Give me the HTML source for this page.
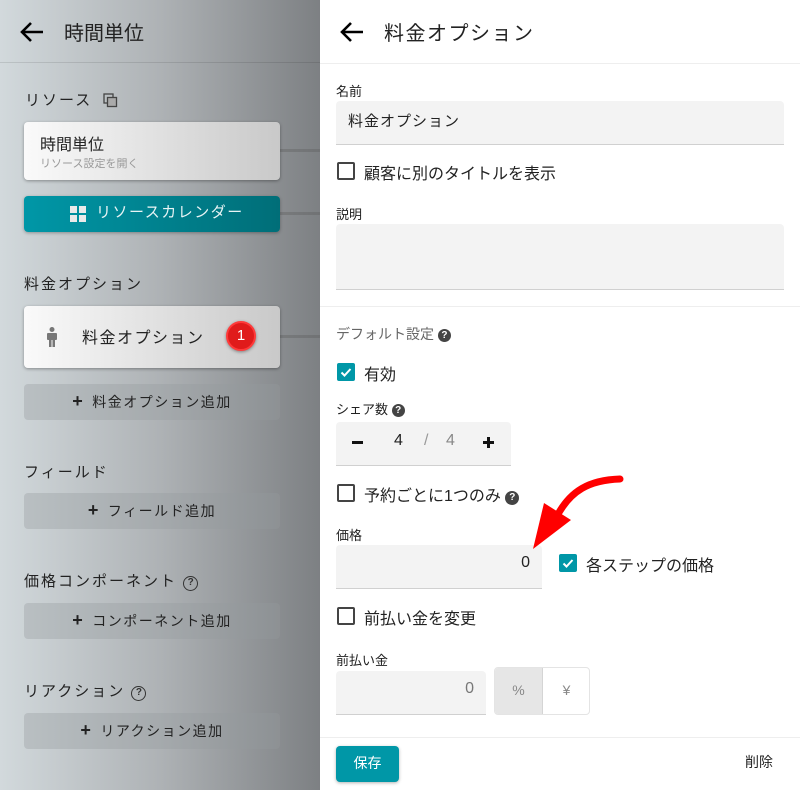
<!DOCTYPE html>
<html><head><meta charset="utf-8">
<style>
*{box-sizing:border-box;margin:0;padding:0}
body{width:800px;height:790px;overflow:hidden;position:relative;font-family:"Liberation Sans","Noto Sans CJK JP",sans-serif;color:#222;background:#fff}
.a{position:absolute}
#left{left:0;top:0;width:320px;height:790px;background:linear-gradient(90deg,#d2d9dc 0%,#aeb2b5 50%,#7d8083 100%)}
.lbl{font-size:15px;letter-spacing:2px;color:#222}
.card{left:24px;width:256px;background:linear-gradient(90deg,#fafafa,#c9c9c9);border-radius:4px;box-shadow:0 1px 3px rgba(0,0,0,.35)}
.addb{left:24px;width:256px;height:36px;background:rgba(150,155,158,.35);border-radius:4px;font-size:14px;letter-spacing:1.5px;text-align:center;line-height:34px;color:#222}
.addb b{font-size:18px;margin-right:8px}
.conn{left:280px;width:40px;height:3px;background:rgba(90,90,90,.35)}
.flbl{font-size:13px;color:#222}
.inp{background:#f3f3f3;border-bottom:1px solid #d0d0d0;border-radius:4px 4px 0 0}
.cb{width:18px;height:18px;border:2px solid #444;border-radius:2px}
.cbt{width:18px;height:18px;background:#0097a7;border-radius:2px}
.t16{font-size:16px}
.q{display:inline-block;width:13px;height:13px;border-radius:50%;background:#444;color:#fff;font-size:10px;font-weight:bold;text-align:center;line-height:13px;vertical-align:1px}
</style></head><body>
<div id="left" class="a">
  <svg class="a" style="left:20px;top:21px" width="24" height="22" viewBox="0 0 24 22"><path d="M23 11H3M11 2L2 11l9 9" stroke="#000" stroke-width="2.6" fill="none"/></svg>
  <div class="a" style="left:64px;top:17px;font-size:20px">時間単位</div>
  <div class="a" style="left:0;top:62px;width:320px;height:1px;background:rgba(0,0,0,.1)"></div>
  <div class="a lbl" style="left:25px;top:89px">リソース</div>
  <svg class="a" style="left:103px;top:93px" width="15" height="15" viewBox="0 0 15 15"><rect x="1" y="1" width="9" height="9" fill="none" stroke="#444" stroke-width="1.3"/><rect x="4.5" y="4.5" width="9" height="9" fill="#aaa" stroke="#444" stroke-width="1.3"/></svg>
  <div class="a conn" style="top:149px"></div>
  <div class="a card" style="top:122px;height:58px"><div class="a" style="left:16px;top:9px;font-size:16px">時間単位</div><div class="a" style="left:16px;top:33px;font-size:11px;color:#999">リソース設定を開く</div></div>
  <div class="a conn" style="top:212px"></div>
  <div class="a" style="left:24px;top:196px;width:256px;height:36px;border-radius:4px;background:linear-gradient(90deg,#0097a7,#006e78);box-shadow:0 1px 3px rgba(0,0,0,.3);color:#e8f4f5;font-size:15px;letter-spacing:1.5px;line-height:34px;padding-left:72px">リソースカレンダー
    <svg class="a" style="left:46px;top:10px" width="16" height="16" viewBox="0 0 16 16" fill="#eaeaea"><rect x="0" y="0" width="7" height="7"/><rect x="9" y="0" width="7" height="7"/><rect x="0" y="9" width="7" height="7"/><rect x="9" y="9" width="7" height="7"/></svg></div>
  <div class="a lbl" style="left:24px;top:273px">料金オプション</div>
  <div class="a conn" style="top:335px"></div>
  <div class="a card" style="top:306px;height:62px">
    <svg class="a" style="left:22px;top:21px" width="12" height="20" viewBox="0 0 12 20" fill="#777"><circle cx="6" cy="2.5" r="2.5"/><rect x="1" y="6" width="10" height="7" rx="1"/><rect x="3" y="12" width="2.5" height="8"/><rect x="6.5" y="12" width="2.5" height="8"/></svg>
    <div class="a" style="left:58px;top:18px;font-size:16px;letter-spacing:1.5px">料金オプション</div>
    <div class="a" style="left:202px;top:15px;width:30px;height:30px;border-radius:50%;background:#e01b1b;border:2px solid #ff3a3a;box-shadow:0 1px 3px rgba(0,0,0,.4);color:#fff;font-size:15px;text-align:center;line-height:26px">1</div>
  </div>
  <div class="a addb" style="top:384px"><b>+</b>料金オプション追加</div>
  <div class="a lbl" style="left:24px;top:461px">フィールド</div>
  <div class="a addb" style="top:493px"><b>+</b>フィールド追加</div>
  <div class="a lbl" style="left:24px;top:570px">価格コンポーネント <span class="q" style="background:none;border:1.5px solid #333;color:#333;width:15px;height:15px;line-height:12px;letter-spacing:0">?</span></div>
  <div class="a addb" style="top:603px"><b>+</b>コンポーネント追加</div>
  <div class="a lbl" style="left:24px;top:680px">リアクション <span class="q" style="background:none;border:1.5px solid #333;color:#333;width:15px;height:15px;line-height:12px;letter-spacing:0">?</span></div>
  <div class="a addb" style="top:713px"><b>+</b>リアクション追加</div>
</div>

<svg class="a" style="left:340px;top:21px" width="24" height="22" viewBox="0 0 24 22"><path d="M23 11H3M11 2L2 11l9 9" stroke="#000" stroke-width="2.6" fill="none"/></svg>
<div class="a" style="left:384px;top:17px;font-size:20px;letter-spacing:1.5px">料金オプション</div>
<div class="a" style="left:320px;top:63px;width:480px;height:1px;background:#eee"></div>

<div class="a flbl" style="left:336px;top:81px">名前</div>
<div class="a inp" style="left:336px;top:101px;width:448px;height:44px"><div class="a" style="left:12px;top:9px;font-size:15px;letter-spacing:1px">料金オプション</div></div>
<div class="a cb" style="left:337px;top:162px"></div>
<div class="a t16" style="left:364px;top:160px">顧客に別のタイトルを表示</div>
<div class="a flbl" style="left:336px;top:204px">説明</div>
<div class="a inp" style="left:336px;top:224px;width:448px;height:66px"></div>
<div class="a" style="left:320px;top:306px;width:480px;height:1px;background:#eee"></div>

<div class="a" style="left:336px;top:324px;font-size:14px;color:#666">デフォルト設定 <span class="q">?</span></div>
<div class="a cbt" style="left:337px;top:363px"><svg width="18" height="18"><path d="M4.5 9.5l3 3 6-6.5" stroke="#fff" stroke-width="2" fill="none"/></svg></div>
<div class="a t16" style="left:364px;top:361px">有効</div>
<div class="a" style="left:336px;top:399px;font-size:13px;color:#222">シェア数 <span class="q">?</span></div>
<div class="a inp" style="left:336px;top:422px;width:175px;height:44px">
  <div class="a" style="left:16px;top:19px;width:11px;height:3px;background:#111"></div>
  <div class="a" style="left:58px;top:10px;font-size:16px">4</div>
  <div class="a" style="left:88px;top:10px;font-size:16px;color:#999">/</div>
  <div class="a" style="left:110px;top:10px;font-size:16px;color:#888">4</div>
  <div class="a" style="left:147px;top:19px;width:11px;height:3px;background:#111"></div>
  <div class="a" style="left:151px;top:15px;width:3px;height:11px;background:#111"></div>
</div>
<div class="a cb" style="left:337px;top:484px"></div>
<div class="a t16" style="left:364px;top:482px">予約ごとに1つのみ <span class="q" style="width:14px;height:14px">?</span></div>
<div class="a flbl" style="left:336px;top:525px">価格</div>
<div class="a inp" style="left:336px;top:545px;width:206px;height:44px"><div class="a" style="right:12px;top:9px;font-size:16px">0</div></div>
<div class="a cbt" style="left:559px;top:554px"><svg width="18" height="18"><path d="M4.5 9.5l3 3 6-6.5" stroke="#fff" stroke-width="2" fill="none"/></svg></div>
<div class="a t16" style="left:586px;top:552px">各ステップの価格</div>
<div class="a cb" style="left:337px;top:607px"></div>
<div class="a t16" style="left:364px;top:605px">前払い金を変更</div>
<div class="a flbl" style="left:336px;top:650px">前払い金</div>
<div class="a inp" style="left:336px;top:671px;width:150px;height:44px"><div class="a" style="right:12px;top:9px;font-size:16px;color:#777">0</div></div>
<div class="a" style="left:494px;top:667px;width:96px;height:48px;border:1px solid #e4e4e4;border-radius:4px;overflow:hidden">
  <div class="a" style="left:0;top:0;width:48px;height:46px;background:#e6e6e6;border-right:1px solid #d5d5d5;text-align:center;line-height:44px;font-size:14px;color:#888">%</div>
  <div class="a" style="left:48px;top:0;width:47px;height:46px;text-align:center;line-height:44px;font-size:14px;color:#888">¥</div>
</div>
<div class="a" style="left:320px;top:737px;width:480px;height:1px;background:#eee"></div>
<div class="a" style="left:336px;top:746px;width:63px;height:36px;background:#0097a7;border-radius:4px;box-shadow:0 1px 3px rgba(0,0,0,.3);color:#fff;font-size:14px;text-align:center;line-height:34px">保存</div>
<div class="a" style="left:745px;top:752px;font-size:14px">削除</div>

<svg class="a" style="left:520px;top:470px" width="110" height="90" viewBox="0 0 110 90">
  <path d="M100 9C70 10 50 20 36 48" stroke="#f00" stroke-width="7" fill="none" stroke-linecap="round"/>
  <path d="M13 79L24 33 51 50Z" fill="#f00"/>
</svg>
</body></html>
